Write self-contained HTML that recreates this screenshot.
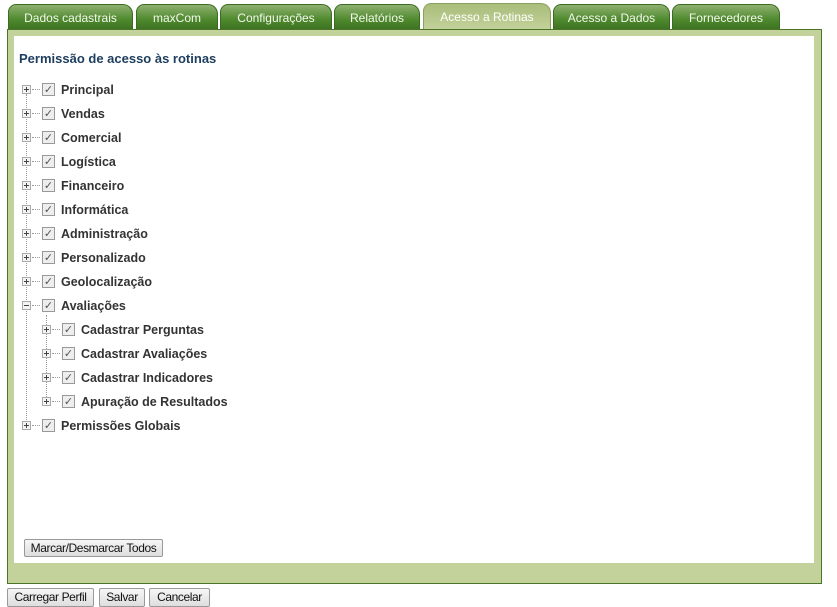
<!DOCTYPE html>
<html><head><meta charset="utf-8"><style>
body{margin:0;width:837px;height:607px;background:#fff;font-family:"Liberation Sans",sans-serif;position:relative;overflow:hidden}
.tab{position:absolute;top:4px;height:25px;background:linear-gradient(#8fb070,#4f8a2e 60%,#3d7322);color:#f4f8ee;font-size:12px;line-height:26px;text-align:center;border-radius:8px 10px 0 0;border:1px solid #3b6b22;border-bottom:none;box-sizing:border-box}
.tab.act{background:linear-gradient(#a9bd7a,#c3d29b);color:#fff;top:3px;height:27px;border-color:#8aa060}
.panel{position:absolute;left:7px;top:29px;width:815px;height:550px;background:#c3d29b;border:1px solid #4a7426;box-sizing:border-box}
.inner{position:absolute;left:14px;top:36px;width:800px;height:527px;background:#fff}
.strip{position:absolute;left:7px;top:578px;width:815px;height:6px;background:#c3d29b;border:1px solid #4a7426;border-top:none;box-sizing:border-box}
h1{position:absolute;left:19px;top:51px;margin:0;font-size:13px;color:#1d3d5e;font-weight:bold}
.row{position:absolute;height:16px;font-size:12.5px;font-weight:bold;color:#333;line-height:16px}
.exp{position:absolute;left:0;top:3px;width:9px;height:9px;border:1px solid #aaa;box-sizing:border-box;background:#f4f4f4}
.exp:before{content:"";position:absolute;left:1px;top:3px;width:5px;height:1px;background:#444}
.exp.p:after{content:"";position:absolute;left:3px;top:1px;width:1px;height:5px;background:#444}
.dash{position:absolute;left:10px;top:7px;width:8px;border-top:1px dotted #999}
.cb{position:absolute;left:20px;top:1px;width:13px;height:13px;border:1px solid #999;box-sizing:border-box;background:#eee;font-size:11px;line-height:11px;text-align:center;color:#555;font-weight:bold;font-family:"DejaVu Sans",sans-serif}
.lbl{position:absolute;left:39px;top:0;white-space:nowrap}
.vl{position:absolute;border-left:1px dotted #999}
.btn{position:absolute;font-family:"Liberation Sans",sans-serif;font-size:12px;color:#111;background:linear-gradient(#f6f6f6,#dedede);border:1px solid #999;border-radius:2px;box-sizing:border-box;text-align:center;letter-spacing:-0.4px}
</style></head><body>
<div class="tab" style="left:8px;width:125px">Dados cadastrais</div>
<div class="tab" style="left:136px;width:82px">maxCom</div>
<div class="tab" style="left:220px;width:112px">Configurações</div>
<div class="tab" style="left:334px;width:86px">Relatórios</div>
<div class="tab act" style="left:423px;width:128px">Acesso a Rotinas</div>
<div class="tab" style="left:553px;width:117px">Acesso a Dados</div>
<div class="tab" style="left:672px;width:108px">Fornecedores</div>
<div class="panel"></div>
<div class="inner"></div>
<div class="strip"></div>
<h1>Permissão de acesso às rotinas</h1>
<div class="vl" style="left:26px;top:94px;height:334px"></div>
<div class="vl" style="left:46px;top:315px;height:88px"></div>
<div class="row" style="left:22px;top:82px"><div class="exp p"></div><div class="dash"></div><div class="cb">✓</div><div class="lbl">Principal</div></div>
<div class="row" style="left:22px;top:106px"><div class="exp p"></div><div class="dash"></div><div class="cb">✓</div><div class="lbl">Vendas</div></div>
<div class="row" style="left:22px;top:130px"><div class="exp p"></div><div class="dash"></div><div class="cb">✓</div><div class="lbl">Comercial</div></div>
<div class="row" style="left:22px;top:154px"><div class="exp p"></div><div class="dash"></div><div class="cb">✓</div><div class="lbl">Logística</div></div>
<div class="row" style="left:22px;top:178px"><div class="exp p"></div><div class="dash"></div><div class="cb">✓</div><div class="lbl">Financeiro</div></div>
<div class="row" style="left:22px;top:202px"><div class="exp p"></div><div class="dash"></div><div class="cb">✓</div><div class="lbl">Informática</div></div>
<div class="row" style="left:22px;top:226px"><div class="exp p"></div><div class="dash"></div><div class="cb">✓</div><div class="lbl">Administração</div></div>
<div class="row" style="left:22px;top:250px"><div class="exp p"></div><div class="dash"></div><div class="cb">✓</div><div class="lbl">Personalizado</div></div>
<div class="row" style="left:22px;top:274px"><div class="exp p"></div><div class="dash"></div><div class="cb">✓</div><div class="lbl">Geolocalização</div></div>
<div class="row" style="left:22px;top:298px"><div class="exp"></div><div class="dash"></div><div class="cb">✓</div><div class="lbl">Avaliações</div></div>
<div class="row" style="left:42px;top:322px"><div class="exp p"></div><div class="dash"></div><div class="cb">✓</div><div class="lbl">Cadastrar Perguntas</div></div>
<div class="row" style="left:42px;top:346px"><div class="exp p"></div><div class="dash"></div><div class="cb">✓</div><div class="lbl">Cadastrar Avaliações</div></div>
<div class="row" style="left:42px;top:370px"><div class="exp p"></div><div class="dash"></div><div class="cb">✓</div><div class="lbl">Cadastrar Indicadores</div></div>
<div class="row" style="left:42px;top:394px"><div class="exp p"></div><div class="dash"></div><div class="cb">✓</div><div class="lbl">Apuração de Resultados</div></div>
<div class="row" style="left:22px;top:418px"><div class="exp p"></div><div class="dash"></div><div class="cb">✓</div><div class="lbl">Permissões Globais</div></div>
<div class="btn" style="left:24px;top:539px;width:139px;height:18px;line-height:16px">Marcar/Desmarcar Todos</div>
<div class="btn" style="left:7px;top:588px;width:87px;height:19px;line-height:17px">Carregar Perfil</div>
<div class="btn" style="left:99px;top:588px;width:46px;height:19px;line-height:17px">Salvar</div>
<div class="btn" style="left:149px;top:588px;width:61px;height:19px;line-height:17px">Cancelar</div>
</body></html>
